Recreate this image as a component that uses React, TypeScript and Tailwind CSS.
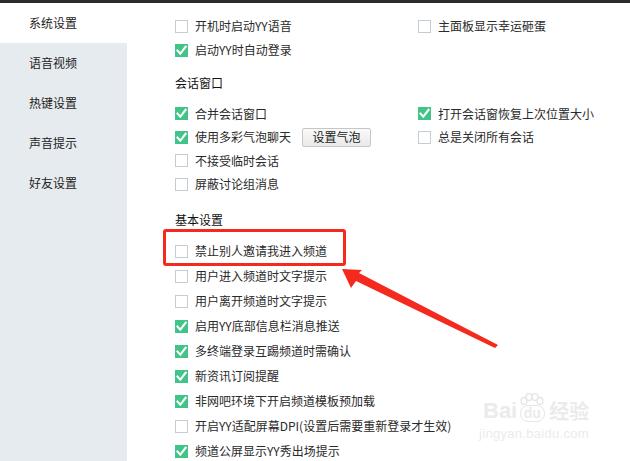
import React from "react";

const font = { fontFamily: '"Noto Sans CJK SC", "Microsoft YaHei", sans-serif' };

function Box({ checked }: { checked?: boolean }) {
  if (checked) {
    return (
      <span className="w-[13px] h-[13px] bg-[#40c487] flex items-center justify-center shrink-0">
        <svg width="11" height="11" viewBox="0 0 11 11">
          <path d="M1.5 5.6 L4.3 8.6 L9.6 1.8" fill="none" stroke="#fff" strokeWidth="2.1" strokeLinecap="square" />
        </svg>
      </span>
    );
  }
  return <span className="w-[13px] h-[13px] border border-[#c3cdd5] bg-white shrink-0" />;
}

function Item({ label, checked, h = "h-6" }: { label: string; checked?: boolean; h?: string }) {
  return (
    <div className={`flex items-center gap-[7px] ${h}`}>
      <Box checked={checked} />
      <span className="text-[12px] text-[#2a2a2a] whitespace-nowrap leading-none">{label}</span>
    </div>
  );
}

export default function App() {
  const side = ["语音视频", "热键设置", "声音提示", "好友设置"];
  return (
    <div className="relative w-[630px] h-[461px] overflow-hidden bg-white" style={font}>
      <div className="h-[3px] bg-[#2b2b2b]" />
      <div className="flex h-[458px]">
        <div className="w-[127px] bg-[#e6ebef] flex flex-col">
          <div className="h-10 bg-white flex items-center pl-[29px] text-[12px] text-[#222]">系统设置</div>
          {side.map((s) => (
            <div key={s} className="h-10 flex items-center pl-[29px] text-[12px] text-[#222]">
              {s}
            </div>
          ))}
        </div>
        <div className="flex-1 pl-[48px] pt-[11px]">
          <div className="grid grid-cols-[243px_1fr]">
            <Item label="开机时启动YY语音" />
            <Item label="主面板显示幸运砸蛋" />
            <Item label="启动YY时自动登录" checked />
            <div />
          </div>
          <div className="h-5 mt-[11px] flex items-center text-[12px] text-[#111]">会话窗口</div>
          <div className="grid grid-cols-[243px_1fr] mt-[9px]">
            <Item label="合并会话窗口" checked h="h-[23.5px]" />
            <Item label="打开会话窗恢复上次位置大小" checked h="h-[23.5px]" />
            <div className="flex items-center h-[23.5px]">
              <Item label="使用多彩气泡聊天" checked h="h-[23.5px]" />
              <button className="ml-[11px] w-[69px] h-[19px] rounded-[2px] border border-[#c6c6c6] bg-gradient-to-b from-[#fafafa] to-[#e9e9e9] text-[12px] text-[#222] leading-none flex items-center justify-center">
                设置气泡
              </button>
            </div>
            <Item label="总是关闭所有会话" h="h-[23.5px]" />
            <Item label="不接受临时会话" h="h-[23.5px]" />
            <div />
            <Item label="屏蔽讨论组消息" h="h-[23.5px]" />
            <div />
          </div>
          <div className="h-5 mt-[14px] flex items-center text-[12px] text-[#111]">基本设置</div>
          <div className="flex flex-col mt-[8.5px]">
            <Item label="禁止别人邀请我进入频道" h="h-[25px]" />
            <Item label="用户进入频道时文字提示" h="h-[25px]" />
            <Item label="用户离开频道时文字提示" h="h-[25px]" />
            <Item label="启用YY底部信息栏消息推送" checked h="h-[25px]" />
            <Item label="多终端登录互踢频道时需确认" checked h="h-[25px]" />
            <Item label="新资讯订阅提醒" checked h="h-[25px]" />
            <Item label="非网吧环境下开启频道模板预加载" checked h="h-[25px]" />
            <Item label="开启YY适配屏幕DPI(设置后需要重新登录才生效)" h="h-[25px]" />
            <Item label="频道公屏显示YY秀出场提示" checked h="h-[25px]" />
          </div>
        </div>
      </div>

      {/* watermark */}
      <div className="absolute left-[483px] top-[393px] flex flex-col items-start text-[#ebebeb] pointer-events-none" style={{ fontFamily: '"Liberation Sans", "Noto Sans CJK SC", sans-serif' }}>
        <div className="flex items-end gap-[2px]">
          <span className="text-[22px] font-bold leading-none">Bai</span>
          <span className="relative flex flex-col items-center">
            <svg width="26" height="12" viewBox="0 0 26 12">
              <ellipse cx="5" cy="8" rx="3" ry="3.5" fill="none" stroke="#e6e6e6" strokeWidth="1.3" />
              <ellipse cx="10" cy="4" rx="3" ry="3.5" fill="none" stroke="#e6e6e6" strokeWidth="1.3" />
              <ellipse cx="16" cy="4" rx="3" ry="3.5" fill="none" stroke="#e6e6e6" strokeWidth="1.3" />
              <ellipse cx="21" cy="8" rx="3" ry="3.5" fill="none" stroke="#e6e6e6" strokeWidth="1.3" />
            </svg>
            <span className="text-[14px] font-bold leading-none border-[1.5px] border-[#e6e6e6] rounded-[8px] px-[3px] pb-[1px]">du</span>
          </span>
          <span className="text-[20px] font-bold leading-none ml-[2px]">经验</span>
        </div>
        <span className="text-[13px] leading-none mt-[5px] -ml-[4px] tracking-[0.3px]">jingyan.baidu.com</span>
      </div>

      {/* annotation red box */}
      <div className="absolute left-[163px] top-[229px] w-[183px] h-[37px] border-[3px] border-[#f52a1f] rounded-[3px]" />
      {/* arrow */}
      <svg className="absolute left-0 top-0" width="630" height="461" viewBox="0 0 630 461">
        <polygon points="342,269 362,270 359,273 498,345 495,348 356,281 351,288" fill="#f52a1f" />
      </svg>
    </div>
  );
}
